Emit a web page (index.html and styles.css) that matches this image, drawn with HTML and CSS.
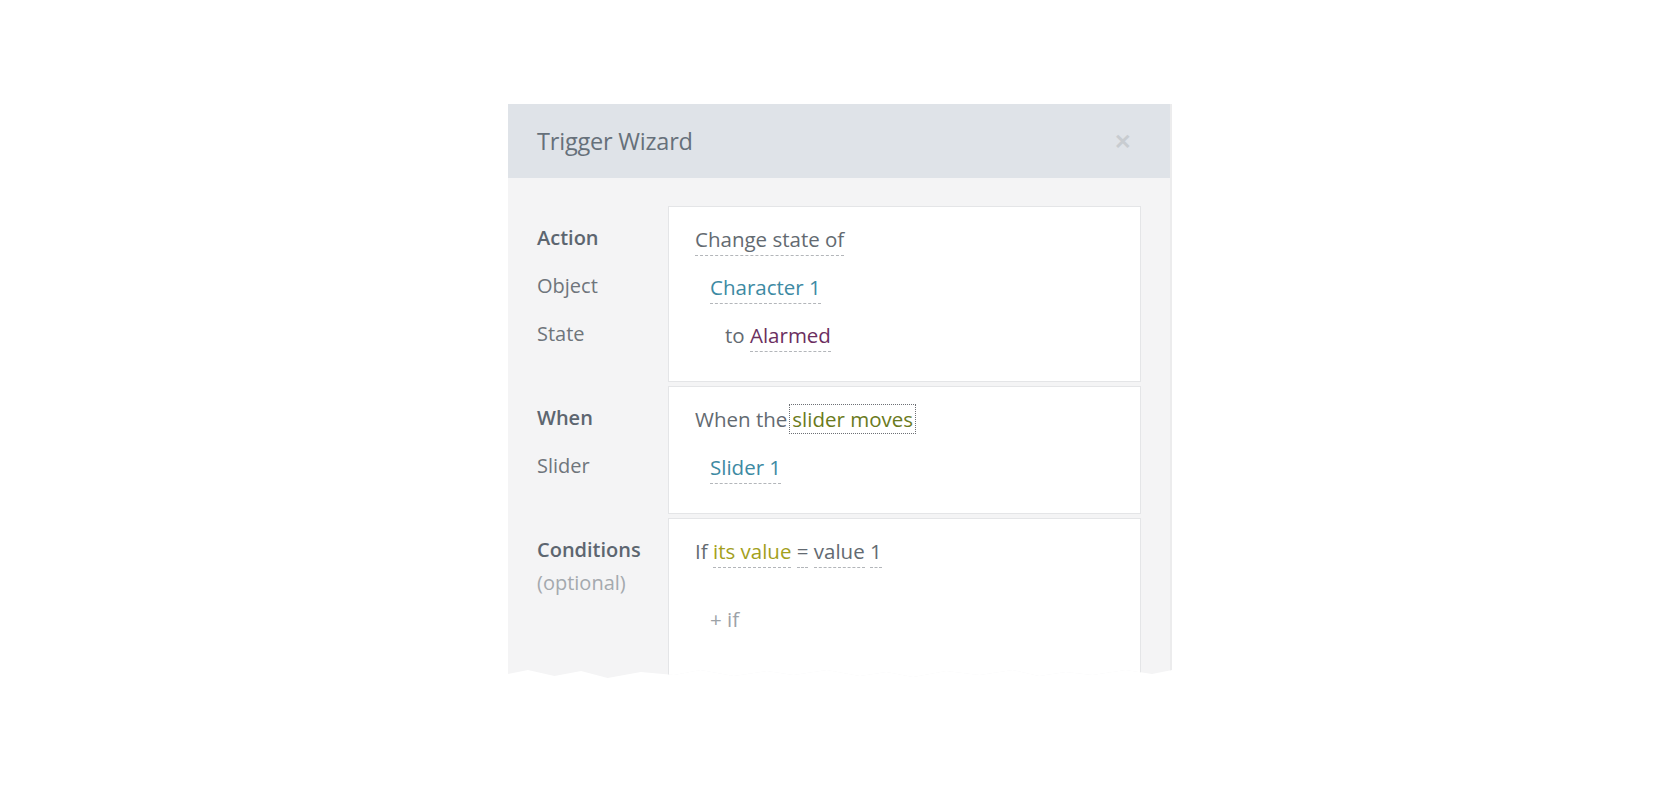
FILE: index.html
```html
<!DOCTYPE html>
<html>

<head>
    <meta charset="utf-8">
    <title>Trigger Wizard</title>
    <link rel="stylesheet" href="styles.css">
</head>

<body>
    <div class="dialog">
        <div class="dialog-header">
            <h2 class="dialog-title">Trigger Wizard</h2>
            <span class="dialog-close">&#x2715;</span>
        </div>

        <div class="dialog-body">
            <div class="section">
                <div class="labels">
                    <div class="label strong">Action</div>
                    <div class="label">Object</div>
                    <div class="label">State</div>
                </div>
                <div class="card">
                    <div class="row"><span class="pick">Change state of</span></div>
                    <div class="row indent-1"><span class="pick object">Character 1</span></div>
                    <div class="row indent-2">to <span class="pick state">Alarmed</span></div>
                </div>
            </div>

            <div class="section">
                <div class="labels">
                    <div class="label strong">When</div>
                    <div class="label">Slider</div>
                </div>
                <div class="card">
                    <div class="row">When the<span class="event">slider moves</span></div>
                    <div class="row indent-1"><span class="pick object">Slider 1</span></div>
                </div>
            </div>

            <div class="section last">
                <div class="labels">
                    <div class="label strong">Conditions</div>
                    <div class="label optional">(optional)</div>
                </div>
                <div class="card tall">
                    <div class="row">If <span class="pick prop">its value</span> <span class="pick">=</span> <span class="pick">value</span> <span class="pick">1</span></div>
                    <div class="row indent-1 add">+ if</div>
                </div>
            </div>
        </div>
    </div>
</body>

</html>
```

FILE: styles.css
```css
* {
    box-sizing: border-box;
}

body {
    margin: 0;
    background-color: #ffffff;
    font-family: "Open Sans", "Noto Sans", Arial, sans-serif;
    color: #646b72;
}

.dialog {
    width: 664px;
    height: 578px;
    margin: 104px 0 0 508px;
    background-color: #f4f4f5;
    border-right: 2px solid #ececed;
    overflow: hidden;
    clip-path: polygon(0 0, 100% 0, 100% 566px, 97% 570px, 93% 566px, 88% 571px, 84% 568px,
        80% 572px, 76% 566px, 71% 571px, 66% 567px, 61% 573px, 57% 568px, 53% 572px,
        48% 566px, 43% 571px, 39% 567px, 34% 572px, 29% 566px, 25% 571px, 20% 568px,
        15% 574px, 11% 567px, 7% 572px, 3% 566px, 0 570px);
}

.dialog-header {
    display: flex;
    align-items: center;
    justify-content: space-between;
    height: 74px;
    padding: 0 38px 0 29px;
    background-color: #dfe3e8;
}

.dialog-title {
    margin: 0;
    font-size: 23.5px;
    font-weight: 400;
    color: #66707a;
    letter-spacing: -0.2px;
}

.dialog-close {
    font-size: 21px;
    font-weight: 700;
    color: #c8ccd0;
}

.dialog-body {
    padding: 28px 29px 0 29px;
    display: flex;
    flex-direction: column;
    gap: 4px;
}

.section {
    display: flex;
}

.labels {
    width: 131px;
    padding-top: 8px;
}

.label {
    height: 48px;
    line-height: 48px;
    font-size: 20px;
    color: #6f757b;
}

.label.strong {
    font-weight: 600;
    color: #5d6670;
}

.section.last .label {
    height: 33px;
    line-height: 48px;
}

.label.optional {
    line-height: 33px;
    color: #a4a9ae;
}

.card {
    flex: 1;
    background-color: #ffffff;
    border: 1px solid #e4e5e7;
    padding: 8px 20px 22px 26px;
}

.card.tall {
    height: 220px;
}

.row {
    height: 48px;
    line-height: 48px;
    font-size: 20.5px;
    color: #636a71;
    white-space: nowrap;
}

.indent-1 {
    padding-left: 15px;
}

.indent-2 {
    padding-left: 30px;
}

.pick {
    padding-bottom: 2px;
    border-bottom: 1px dashed #b3b6ba;
}

.pick.object {
    color: #3d8aa3;
}

.pick.state {
    color: #6b2e60;
}

.pick.prop {
    color: #a3a01c;
}

.event {
    margin-left: 2px;
    padding: 0 2px;
    border: 1px dotted #6d7075;
    color: #6a7a20;
}

.add {
    margin-top: 20px;
    color: #9da2a7;
}
```
